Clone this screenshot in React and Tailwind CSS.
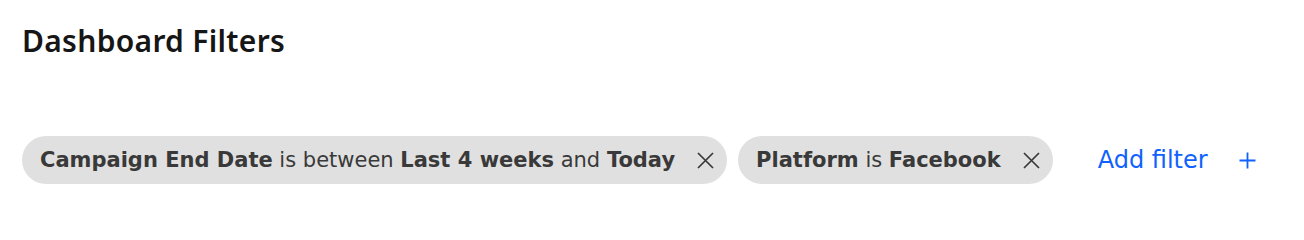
import React from "react";

function XIcon() {
  return (
    <svg width="17" height="17" viewBox="0 0 17 17" fill="none" stroke="currentColor" strokeWidth="1.7" aria-hidden="true">
      <path d="M1 1 16 16M16 1 1 16" />
    </svg>
  );
}

function PlusIcon() {
  return (
    <svg width="17" height="17" viewBox="0 0 17 17" fill="none" stroke="currentColor" strokeWidth="1.8" aria-hidden="true">
      <path d="M8.5 0.5v16M0.5 8.5h16" />
    </svg>
  );
}

function Chip({ children }) {
  return (
    <div className="flex h-[48px] items-center rounded-full bg-[#e0e0e0] pl-[18px] pr-[13px] text-[21px] leading-[48px] text-[#393939]">
      <span className="whitespace-nowrap">{children}</span>
      <span className="ml-[22px] flex items-center text-[#393939]">
        <XIcon />
      </span>
    </div>
  );
}

export default function App() {
  return (
    <div className="h-[240px] w-[1304px] bg-white px-[22px] pt-[21px]">
      <h1
        className="text-[30px] font-semibold leading-[40px] tracking-[0.3px] text-[#161616]"
        style={{ fontFamily: '"Noto Sans", sans-serif' }}
      >
        Dashboard Filters
      </h1>
      <div className="mt-[75px] flex h-[48px] items-center" style={{ fontFamily: '"DejaVu Sans", sans-serif' }}>
        <div className="flex items-center gap-[11px]">
          <Chip>
            <b className="font-bold">Campaign End Date</b> is between <b className="font-bold">Last 4 weeks</b> and{" "}
            <b className="font-bold">Today</b>
          </Chip>
          <Chip>
            <b className="font-bold">Platform</b> is <b className="font-bold">Facebook</b>
          </Chip>
        </div>
        <div className="ml-[45px] flex items-center text-[24px] leading-[48px] text-[#0f62fe]">
          <span>Add filter</span>
          <span className="ml-[31px] flex items-center">
            <PlusIcon />
          </span>
        </div>
      </div>
    </div>
  );
}
